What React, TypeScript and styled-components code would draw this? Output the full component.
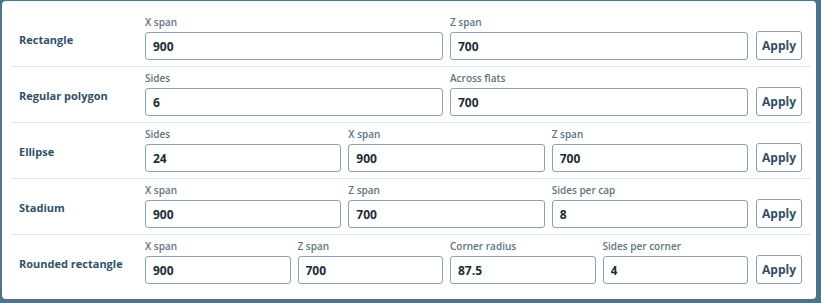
import React from 'react';
import styled, { createGlobalStyle } from 'styled-components';

const GlobalStyle = createGlobalStyle`
  html, body {
    margin: 0;
    padding: 0;
    background: #4b7389;
    font-family: "Open Sans", "Liberation Sans", Arial, sans-serif;
  }
  * { box-sizing: border-box; }
`;

const Panel = styled.div`
  margin: 1px 5px 4px 2px;
  background: #ffffff;
  border-radius: 4px;
  padding: 10px 6px 8px 10px;
  height: 298px;
`;

const Row = styled.div<{ $last?: boolean }>`
  display: flex;
  align-items: flex-end;
  padding: 5px 8px 6px 7px;
  border-bottom: ${(p) => (p.$last ? 'none' : '1px solid #dfe7ec')};
`;

const ShapeName = styled.div`
  width: 126px;
  flex: none;
  align-self: center;
  padding-top: 3px;
  font-size: 11px;
  font-weight: 700;
  color: #2f5069;
`;

const Fields = styled.div<{ $count: number }>`
  flex: 1;
  display: grid;
  grid-template-columns: repeat(${(p) => p.$count}, 1fr);
  column-gap: 7px;
`;

const Field = styled.label`
  display: flex;
  flex-direction: column;
  gap: 3px;
`;

const FieldLabel = styled.span`
  font-size: 10px;
  font-weight: 600;
  line-height: 13px;
  color: #5d7482;
`;

const Input = styled.input`
  height: 28px;
  width: 100%;
  border: 1px solid #8aa2b2;
  border-radius: 3px;
  padding: 0 7px;
  font-family: inherit;
  font-size: 12px;
  font-weight: 700;
  color: #1d2c37;
  background: #fff;
  outline: none;
`;

const ApplyButton = styled.button`
  flex: none;
  margin-left: 8px;
  width: 46px;
  height: 29px;
  border: 1px solid #8aa2b2;
  border-radius: 3px;
  background: #fff;
  font-family: inherit;
  font-size: 12px;
  font-weight: 700;
  color: #2f5069;
  padding: 0;
`;

type Shape = { name: string; fields: [string, string][] };

const shapes: Shape[] = [
  { name: 'Rectangle', fields: [['X span', '900'], ['Z span', '700']] },
  { name: 'Regular polygon', fields: [['Sides', '6'], ['Across flats', '700']] },
  { name: 'Ellipse', fields: [['Sides', '24'], ['X span', '900'], ['Z span', '700']] },
  { name: 'Stadium', fields: [['X span', '900'], ['Z span', '700'], ['Sides per cap', '8']] },
  {
    name: 'Rounded rectangle',
    fields: [['X span', '900'], ['Z span', '700'], ['Corner radius', '87.5'], ['Sides per corner', '4']],
  },
];

function App() {
  return (
    <>
      <GlobalStyle />
      <Panel>
        {shapes.map((s, i) => (
          <Row key={s.name} $last={i === shapes.length - 1}>
            <ShapeName>{s.name}</ShapeName>
            <Fields $count={s.fields.length}>
              {s.fields.map(([label, value]) => (
                <Field key={label}>
                  <FieldLabel>{label}</FieldLabel>
                  <Input defaultValue={value} />
                </Field>
              ))}
            </Fields>
            <ApplyButton>Apply</ApplyButton>
          </Row>
        ))}
      </Panel>
    </>
  );
}

export default App;
